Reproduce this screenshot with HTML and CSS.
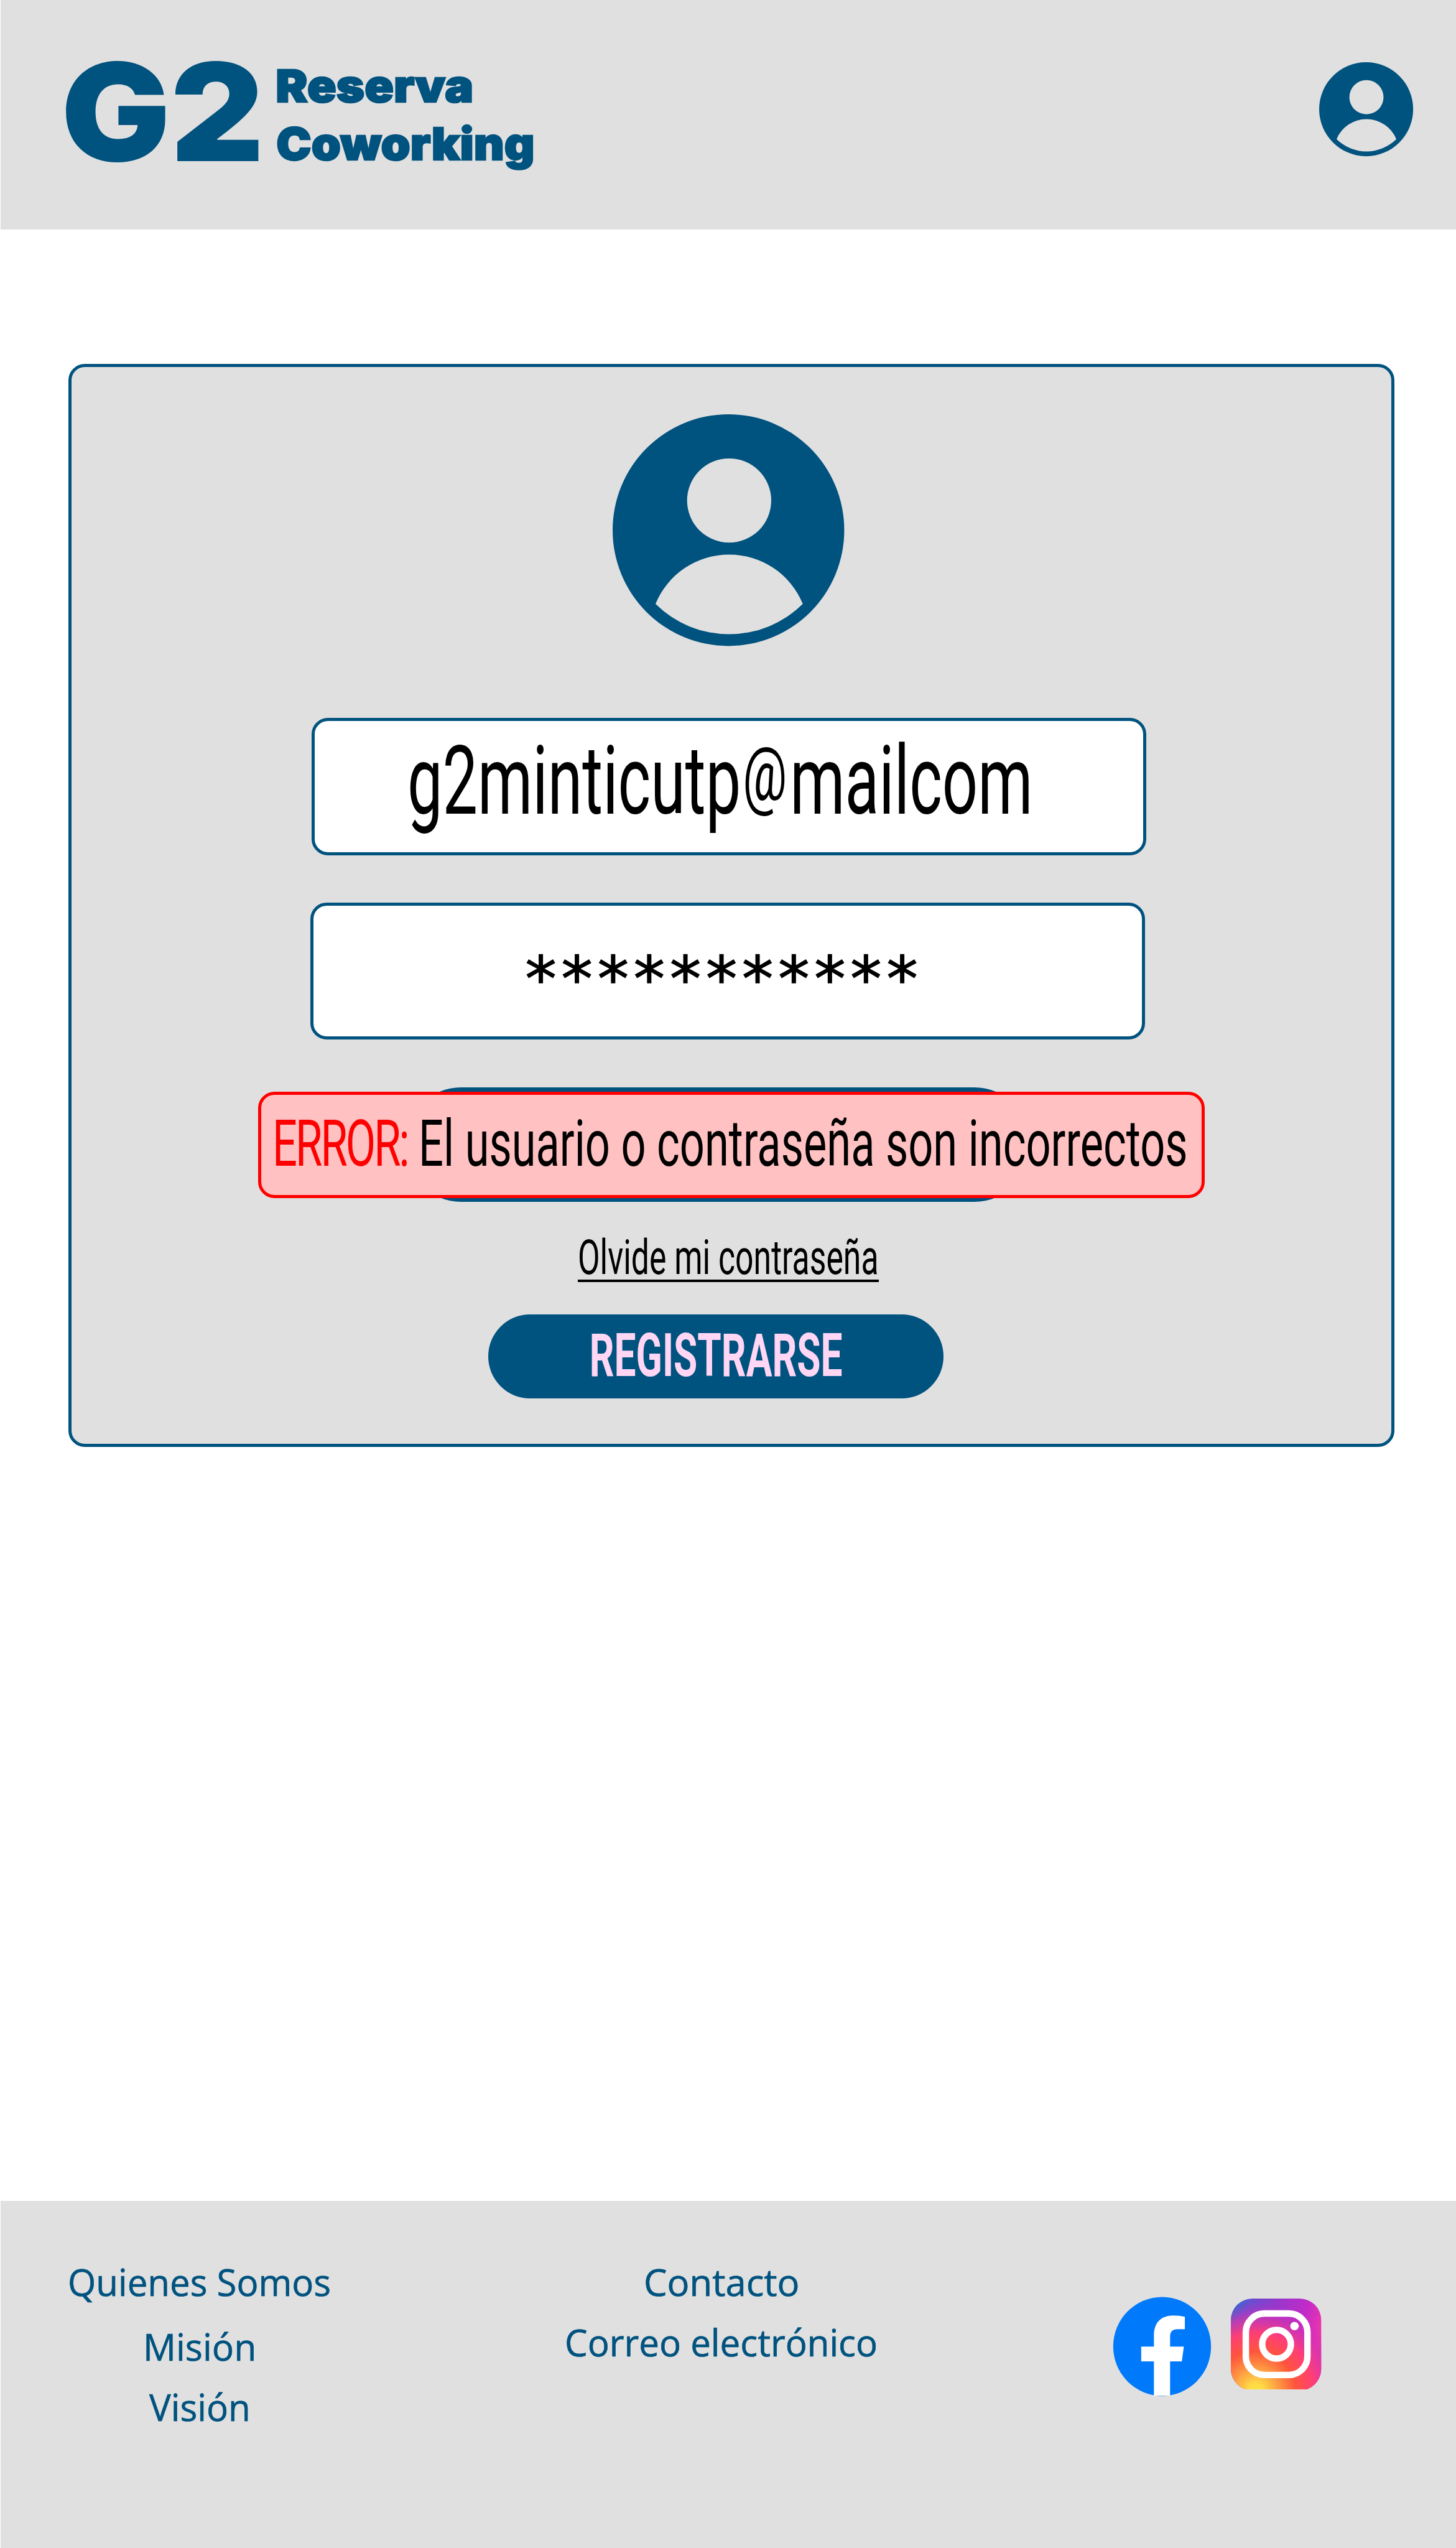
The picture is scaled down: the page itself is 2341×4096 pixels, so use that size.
FILE: index.html
```html
<!DOCTYPE html>
<html lang="es">
<head>
<meta charset="utf-8">
<title>G2 Reserva Coworking</title>
<link rel="stylesheet" href="styles.css">
</head>
<body>
<header class="site-header">
  <svg class="logo" viewBox="108 95 780 190">
    <text class="logo-mark" x="101" y="265" textLength="335" lengthAdjust="spacingAndGlyphs">G2</text>
    <text class="logo-name" x="455" y="168" textLength="326" lengthAdjust="spacingAndGlyphs">Reserva</text>
    <text class="logo-name" x="456" y="263" textLength="426" lengthAdjust="spacingAndGlyphs">Coworking</text>
  </svg>
  <svg class="avatar-small" viewBox="0 0 1145 1145">
    <path class="brand-fill" fill-rule="evenodd" d="M572.500 0a572.500 572.500 0 1 1 0 1145a572.500 572.500 0 1 1 0-1145zM576 218a208 208 0 1 0 0 416a208 208 0 1 0 0-416zM212 937A393.500 393.500 0 0 1 940 937A516.700 516.700 0 0 1 212 937z"/>
  </svg>
</header>

<main class="content">
  <section class="login-card">
    <svg class="avatar-large" viewBox="0 0 1145 1145">
      <path class="brand-fill" fill-rule="evenodd" d="M572.500 0a572.500 572.500 0 1 1 0 1145a572.500 572.500 0 1 1 0-1145zM576 218a208 208 0 1 0 0 416a208 208 0 1 0 0-416zM212 937A393.500 393.500 0 0 1 940 937A516.700 516.700 0 0 1 212 937z"/>
    </svg>
    <div class="field field-user">
      <div class="user-text">g2minticutp<span class="at-sign">@</span>mailcom</div>
    </div>
    <div class="field field-password">
      <svg class="field-text" viewBox="516 1493 1366 216">
        <text class="password-text" x="865" y="1650" textLength="648" lengthAdjust="spacing">***********</text>
      </svg>
    </div>
    <div class="login-row">
      <button class="button login-button" type="button"></button>
      <div class="error">
        <div class="error-text"><span class="error-label">ERROR:</span> El usuario o contraseña son incorrectos</div>
      </div>
    </div>
    <a class="forgot">
      <svg class="forgot-text" viewBox="953 2043 496 67">
        <text x="953" y="2100" textLength="496" lengthAdjust="spacingAndGlyphs">Olvide mi contraseña</text>
      </svg>
    </a>
    <button class="button register-button" type="button">
      <svg class="register-text" viewBox="805 2167 751 138">
        <text x="972" y="2269" textLength="417" lengthAdjust="spacingAndGlyphs">REGISTRARSE</text>
      </svg>
    </button>
  </section>
</main>

<footer class="site-footer">
  <nav class="footer-about">
    <svg class="link-about" viewBox="110 3739 436 46"><text x="110" y="3785" textLength="434" lengthAdjust="spacingAndGlyphs">Quienes Somos</text></svg>
    <svg class="link-mission" viewBox="234 3845 188 46"><text x="234" y="3891" textLength="187" lengthAdjust="spacingAndGlyphs">Misión</text></svg>
    <svg class="link-vision" viewBox="246 3945 168 46"><text x="246" y="3991" textLength="167" lengthAdjust="spacingAndGlyphs">Visión</text></svg>
  </nav>
  <nav class="footer-contact">
    <svg class="link-contact" viewBox="1060 3739 259 46"><text x="1061" y="3785" textLength="257" lengthAdjust="spacingAndGlyphs">Contacto</text></svg>
    <svg class="link-mail" viewBox="929 3838 517 46"><text x="929" y="3884" textLength="516" lengthAdjust="spacingAndGlyphs">Correo electrónico</text></svg>
  </nav>
  <div class="social">
    <svg class="facebook" viewBox="105 81 483 486">
      <ellipse cx="346.500" cy="324" rx="242" ry="244.500" fill="#0079fb"/>
      <path fill="#fff" d="M306 567V398H243V325H306V270C306 207 340 171 402 171C424 171 442 174 459 177V239H424C397 239 386 252 386 275V325H454L444 398H386V567z"/>
    </svg>
    <svg class="instagram" viewBox="687 87 447 450">
      <defs>
        <radialGradient id="ig-warm" gradientUnits="userSpaceOnUse" cx="810" cy="545" r="440" gradientTransform="rotate(-8 810 545)">
          <stop offset="0" stop-color="#ffe13f"/>
          <stop offset=".08" stop-color="#ffdc45"/>
          <stop offset=".26" stop-color="#ff9a42"/>
          <stop offset=".45" stop-color="#ff543d"/>
          <stop offset=".65" stop-color="#ff3f74"/>
          <stop offset=".82" stop-color="#d834ac" stop-opacity=".75"/>
          <stop offset="1" stop-color="#c02cc8" stop-opacity="0"/>
        </radialGradient>
        <linearGradient id="ig-cool" gradientUnits="userSpaceOnUse" x1="687" y1="100" x2="1134" y2="230">
          <stop offset="0" stop-color="#1f74cf"/>
          <stop offset=".2" stop-color="#6a4ed0"/>
          <stop offset=".5" stop-color="#9a36cb"/>
          <stop offset=".8" stop-color="#c32bc8"/>
          <stop offset="1" stop-color="#ec35ac"/>
        </linearGradient>
      </defs>
      <rect x="687" y="87" width="447" height="455" rx="106" fill="url(#ig-cool)"/>
      <rect x="687" y="87" width="447" height="455" rx="106" fill="url(#ig-warm)"/>
      <rect x="761" y="161" width="305" height="304" rx="92" fill="none" stroke="#fff" stroke-width="32"/>
      <circle cx="913" cy="313" r="71" fill="none" stroke="#fff" stroke-width="32"/>
      <circle cx="1002" cy="223" r="21" fill="#fff"/>
    </svg>
  </div>
</footer>
</body>
</html>
```
FILE: styles.css
```css
/* 1rem = 10 design pixels */
html {
  font-size: 9.75px;
}

body {
  margin: 0;
  min-height: 100vh;
  display: flex;
  flex-direction: column;
  background: #fff;
  color: #000;
  font-family: Roboto, "Liberation Sans", sans-serif;
}

* {
  box-sizing: border-box;
}

svg {
  display: block;
  flex: none;
  overflow: visible;
}

.brand-fill {
  fill: #00527f;
}

/* header */
.site-header {
  height: 37.8rem;
  flex: none;
  margin-left: 1px;
  padding: 9.5rem 7.1rem 0 10.7rem;
  display: flex;
  justify-content: space-between;
  align-items: flex-start;
  background: #e0e0e0;
}

.logo {
  width: 78rem;
  height: 19rem;
  fill: #00527f;
  font-family: Inter, sans-serif;
  font-weight: 900;
}

.logo-mark {
  font-size: 224px;
}

.logo-name {
  font-size: 74px;
  stroke: #00527f;
  stroke-width: 2.5px;
}

.avatar-small {
  width: 15.5rem;
  height: 15.5rem;
  margin-top: .8rem;
}

/* login card */
.content {
  flex: none;
  height: 325.1rem;
  padding: 22.2rem 0 0 11.3rem;
}

.login-card {
  width: 218.7rem;
  height: 178.6rem;
  display: flex;
  flex-direction: column;
  align-items: flex-start;
  border: 5px solid #00527f;
  border-radius: 2.7rem;
  background: #e0e0e0;
}

.avatar-large {
  width: 38.2rem;
  height: 38.2rem;
  margin: 7.8rem 0 0 89.2rem;
}

.field {
  flex: none;
  width: 137.6rem;
  height: 22.6rem;
  border: 5px solid #00527f;
  border-radius: 2.7rem;
  background: #fff;
}

.field-user {
  margin: 11.9rem 0 0 39.6rem;
}

.field-password {
  margin: 7.8rem 0 0 39.4rem;
}

.field-text,
.register-text {
  width: 100%;
  height: 100%;
}

/* condensed lettering: natural glyphs squeezed horizontally */
.user-text,
.error-text {
  width: max-content;
  white-space: nowrap;
  transform-origin: 0 0;
}

.user-text {
  margin-left: 15.3rem;
  font-size: 15.8rem;
  line-height: 19.9rem;
  transform: scaleX(.653);
}

.at-sign {
  margin: 0 .8rem 0 .5rem;
  font-size: 12.4rem;
  line-height: 0;
  vertical-align: 2.4rem;
}

.password-text {
  font-family: "DejaVu Sans", sans-serif;
  font-size: 103px;
  stroke: #000;
  stroke-width: 1.5px;
}

.button {
  display: block;
  padding: 0;
  border: 0;
  background: #00527f;
}

.login-row {
  position: relative;
  flex: none;
  margin: 7.9rem 0 0 54.9rem;
}

.login-button {
  width: 103.3rem;
  height: 18.8rem;
  border-radius: 9.4rem;
}

.error {
  position: absolute;
  top: .7rem;
  left: -24.2rem;
  width: 156.2rem;
  height: 17.5rem;
  border: 5px solid #f00;
  border-radius: 2.7rem;
  background: #ffc1c1;
}

.error-text {
  margin-left: 1.9rem;
  font-size: 10.6rem;
  line-height: 16.2rem;
  transform: scaleX(.681);
}

.error-label {
  color: #f00;
  letter-spacing: -.45rem;
}

.forgot {
  flex: none;
  margin: 6.2rem 0 0 83.5rem;
  border-bottom: 4px solid #000;
}

.forgot-text {
  width: 49.6rem;
  height: 6.7rem;
  font-size: 79px;
}

.register-button {
  flex: none;
  width: 75.1rem;
  height: 13.8rem;
  margin: 5.3rem 0 0 68.7rem;
  border-radius: 6.9rem;
}

.register-text {
  fill: #ffd6f3;
  font-family: Roboto, sans-serif;
  font-size: 98px;
  font-weight: 700;
}

/* footer */
.site-footer {
  flex: 1;
  margin-left: 1px;
  padding-top: 11.1rem;
  display: flex;
  align-items: flex-start;
  background: #e0e0e0;
  fill: #00527f;
  font-family: "Open Sans", sans-serif;
  font-size: 62px;
}

.site-footer text {
  stroke: #00527f;
  stroke-width: .7px;
}

.footer-about,
.footer-contact {
  display: flex;
  flex-direction: column;
  align-items: center;
}

.footer-about {
  margin-left: 11.1rem;
}

.footer-contact {
  margin-left: 38.3rem;
  gap: 5.3rem;
}

.link-about {
  width: 43.6rem;
  height: 4.6rem;
}

.link-mission {
  width: 18.8rem;
  height: 4.6rem;
  margin-top: 6rem;
}

.link-vision {
  width: 16.8rem;
  height: 4.6rem;
  margin-top: 5.4rem;
}

.link-contact {
  width: 25.9rem;
  height: 4.6rem;
}

.link-mail {
  width: 51.7rem;
  height: 4.6rem;
}

.social {
  display: flex;
  align-items: flex-start;
  gap: 3.3rem;
  margin: 4.8rem 0 0 38.8rem;
}

.facebook {
  width: 16.1rem;
  height: 16.2rem;
}

.instagram {
  width: 14.9rem;
  height: 15rem;
  margin-top: .2rem;
  overflow: hidden;
}
```
